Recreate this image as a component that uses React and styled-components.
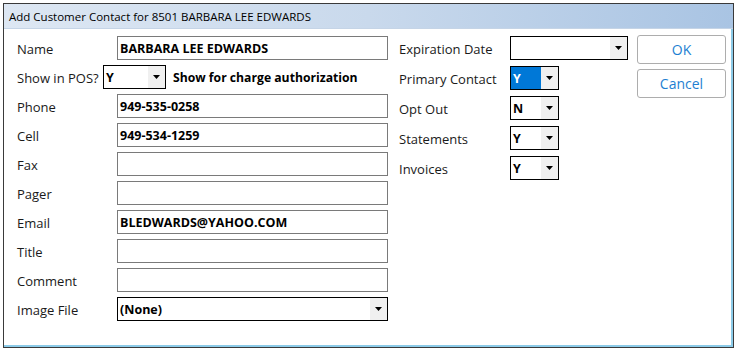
import React from "react";
import styled, { createGlobalStyle } from "styled-components";

const GlobalStyle = createGlobalStyle`
  html, body {
    margin: 0;
    padding: 0;
    background: #ffffff;
  }
  body {
    font-family: "Open Sans", "Noto Sans", sans-serif;
    color: #000;
  }
`;

const Window = styled.div`
  margin: 3px 0 0 3px;
  width: 731px;
  height: 345px;
  box-sizing: border-box;
  border: 1px solid #3a3a3a;
  display: flex;
  flex-direction: column;
  background: #fff;
  box-shadow: inset -2px -2px 0 #8ccbe8;
`;

const TitleBar = styled.div`
  height: 24px;
  display: flex;
  align-items: center;
  padding-left: 5px;
  font-size: 11.5px;
  background: linear-gradient(to right, #dde7f3 0%, #c9d9ec 50%, #a9c4e3 100%);
  border-bottom: 1px solid #c5d4e6;
`;

const Body = styled.div`
  display: flex;
  padding: 7px 0 0 13px;
`;

const LeftCol = styled.div`
  width: 371px;
  display: flex;
  flex-direction: column;
  gap: 5px;
`;

const RightCol = styled.div`
  width: 229px;
  margin-left: 11px;
  display: flex;
  flex-direction: column;
  gap: 6px;
`;

const ButtonCol = styled.div`
  margin-left: 9px;
  margin-top: -1px;
  display: flex;
  flex-direction: column;
  gap: 5px;
`;

const Row = styled.div`
  display: flex;
  align-items: center;
  height: 24px;
`;

const Label = styled.div`
  width: ${(p) => p.$w || 100}px;
  flex: none;
  font-size: 13px;
  padding-top: 1px;
  color: #1a1a1a;
  white-space: nowrap;
`;

const TextBox = styled.div`
  width: 271px;
  height: 24px;
  box-sizing: border-box;
  border: 1px solid #7a7a7a;
  padding: 0 2px;
  display: flex;
  align-items: center;
  font-size: 12.5px;
  font-weight: 700;
  white-space: nowrap;
`;

const Combo = styled.div`
  width: ${(p) => p.$w}px;
  height: 24px;
  box-sizing: border-box;
  border: 1px solid #000;
  display: flex;
  background: #fff;
`;

const ComboValue = styled.div`
  flex: 1;
  display: flex;
  align-items: center;
  padding: 0 2px;
  font-size: 12.5px;
  font-weight: 700;
  background: ${(p) => (p.$selected ? "#0078d7" : "transparent")};
  color: ${(p) => (p.$selected ? "#fff" : "#000")};
`;

const ComboArrow = styled.div`
  width: 17px;
  background: #f0f0f0;
  display: flex;
  align-items: center;
  justify-content: center;
`;

const Note = styled.div`
  margin-left: 7px;
  font-size: 12.2px;
  font-weight: 700;
  white-space: nowrap;
`;

const Button = styled.button`
  width: 89px;
  height: 29px;
  box-sizing: border-box;
  border: 1px solid #adadad;
  border-radius: 3px;
  background: #fff;
  color: #1e7fd2;
  font-family: "Open Sans", "Noto Sans", sans-serif;
  font-size: 14px;
  padding: 0;
`;

const Arrow = () => (
  <svg width="7" height="4" viewBox="0 0 7 4">
    <path d="M0 0h7L3.5 4z" fill="#000" />
  </svg>
);

const Select = ({ w, value, selected }) => (
  <Combo $w={w}>
    <ComboValue $selected={selected}>{value}</ComboValue>
    <ComboArrow>
      <Arrow />
    </ComboArrow>
  </Combo>
);

const Field = ({ label, value }) => (
  <Row>
    <Label>{label}</Label>
    <TextBox>{value}</TextBox>
  </Row>
);

const Flag = ({ label, value, selected }) => (
  <Row>
    <Label $w={111}>{label}</Label>
    <Select w={49} value={value} selected={selected} />
  </Row>
);

export default function App() {
  return (
    <>
      <GlobalStyle />
      <Window>
        <TitleBar>Add Customer Contact for 8501 BARBARA LEE EDWARDS</TitleBar>
        <Body>
          <LeftCol>
            <Field label="Name" value="BARBARA LEE EDWARDS" />
            <Row>
              <Label $w={86}>Show in POS?</Label>
              <Select w={63} value="Y" />
              <Note>Show for charge authorization</Note>
            </Row>
            <Field label="Phone" value="949-535-0258" />
            <Field label="Cell" value="949-534-1259" />
            <Field label="Fax" value="" />
            <Field label="Pager" value="" />
            <Field label="Email" value="BLEDWARDS@YAHOO.COM" />
            <Field label="Title" value="" />
            <Field label="Comment" value="" />
            <Row>
              <Label>Image File</Label>
              <Select w={271} value="(None)" />
            </Row>
          </LeftCol>
          <RightCol>
            <Row>
              <Label $w={111}>Expiration Date</Label>
              <Select w={118} value="" />
            </Row>
            <Flag label="Primary Contact" value="Y" selected />
            <Flag label="Opt Out" value="N" />
            <Flag label="Statements" value="Y" />
            <Flag label="Invoices" value="Y" />
          </RightCol>
          <ButtonCol>
            <Button>OK</Button>
            <Button>Cancel</Button>
          </ButtonCol>
        </Body>
      </Window>
    </>
  );
}
